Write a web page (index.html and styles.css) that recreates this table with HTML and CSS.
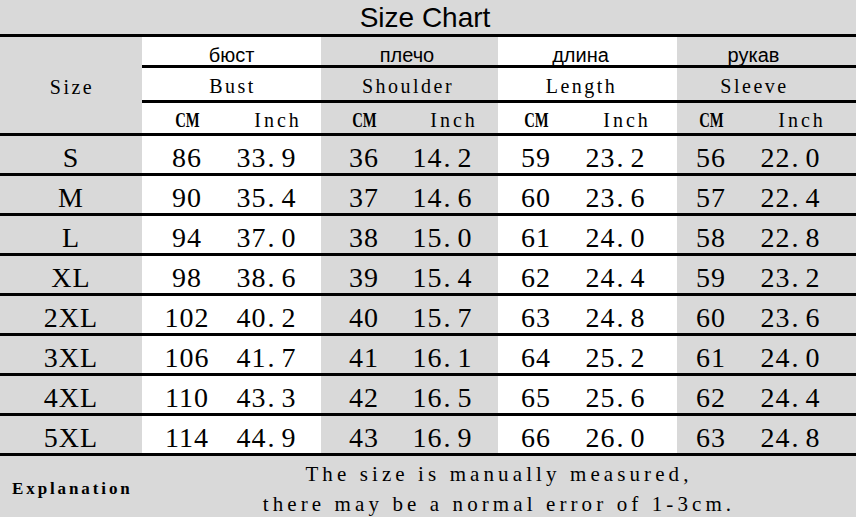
FILE: index.html
```html
<!DOCTYPE html>
<html lang="en">
<head>
<meta charset="utf-8">
<title>Size Chart</title>
<link rel="stylesheet" href="styles.css">
</head>
<body>
<div class="chart">
  <div class="title">Size Chart</div>

  <div class="size-head">Size</div>
  <div class="c cyr w">бюст</div>
  <div class="c cyr s2">плечо</div>
  <div class="c cyr w s3">длина</div>
  <div class="c cyr s4">рукав</div>

  <div class="c eng w">Bust</div>
  <div class="c eng s2">Shoulder</div>
  <div class="c eng w s3">Length</div>
  <div class="c eng s4">Sleeve</div>

  <div class="c unit w"><span class="cmt">CM</span></div><div class="c unit inch w">Inch</div>
  <div class="c unit"><span class="cmt">CM</span></div><div class="c unit inch">Inch</div>
  <div class="c unit w"><span class="cmt">CM</span></div><div class="c unit inch w">Inch</div>
  <div class="c unit"><span class="cmt">CM</span></div><div class="c unit inch">Inch</div>

  <div class="c sz">S</div>
  <div class="c v w">86</div><div class="c v iv w">33<span class="d">.</span>9</div>
  <div class="c v">36</div><div class="c v iv">14<span class="d">.</span>2</div>
  <div class="c v w">59</div><div class="c v iv w">23<span class="d">.</span>2</div>
  <div class="c v">56</div><div class="c v iv">22<span class="d">.</span>0</div>

  <div class="c sz">M</div>
  <div class="c v w">90</div><div class="c v iv w">35<span class="d">.</span>4</div>
  <div class="c v">37</div><div class="c v iv">14<span class="d">.</span>6</div>
  <div class="c v w">60</div><div class="c v iv w">23<span class="d">.</span>6</div>
  <div class="c v">57</div><div class="c v iv">22<span class="d">.</span>4</div>

  <div class="c sz">L</div>
  <div class="c v w">94</div><div class="c v iv w">37<span class="d">.</span>0</div>
  <div class="c v">38</div><div class="c v iv">15<span class="d">.</span>0</div>
  <div class="c v w">61</div><div class="c v iv w">24<span class="d">.</span>0</div>
  <div class="c v">58</div><div class="c v iv">22<span class="d">.</span>8</div>

  <div class="c sz">XL</div>
  <div class="c v w">98</div><div class="c v iv w">38<span class="d">.</span>6</div>
  <div class="c v">39</div><div class="c v iv">15<span class="d">.</span>4</div>
  <div class="c v w">62</div><div class="c v iv w">24<span class="d">.</span>4</div>
  <div class="c v">59</div><div class="c v iv">23<span class="d">.</span>2</div>

  <div class="c sz">2XL</div>
  <div class="c v w">102</div><div class="c v iv w">40<span class="d">.</span>2</div>
  <div class="c v">40</div><div class="c v iv">15<span class="d">.</span>7</div>
  <div class="c v w">63</div><div class="c v iv w">24<span class="d">.</span>8</div>
  <div class="c v">60</div><div class="c v iv">23<span class="d">.</span>6</div>

  <div class="c sz">3XL</div>
  <div class="c v w">106</div><div class="c v iv w">41<span class="d">.</span>7</div>
  <div class="c v">41</div><div class="c v iv">16<span class="d">.</span>1</div>
  <div class="c v w">64</div><div class="c v iv w">25<span class="d">.</span>2</div>
  <div class="c v">61</div><div class="c v iv">24<span class="d">.</span>0</div>

  <div class="c sz">4XL</div>
  <div class="c v w">110</div><div class="c v iv w">43<span class="d">.</span>3</div>
  <div class="c v">42</div><div class="c v iv">16<span class="d">.</span>5</div>
  <div class="c v w">65</div><div class="c v iv w">25<span class="d">.</span>6</div>
  <div class="c v">62</div><div class="c v iv">24<span class="d">.</span>4</div>

  <div class="c sz">5XL</div>
  <div class="c v w">114</div><div class="c v iv w">44<span class="d">.</span>9</div>
  <div class="c v">43</div><div class="c v iv">16<span class="d">.</span>9</div>
  <div class="c v w">66</div><div class="c v iv w">26<span class="d">.</span>0</div>
  <div class="c v">63</div><div class="c v iv">24<span class="d">.</span>8</div>

  <div class="ex">Explanation</div>
  <div class="msg">The size is manually measured,<br>there may be a normal error of 1-3cm.</div>
</div>
</body>
</html>
```

FILE: styles.css
```css
* { box-sizing: border-box; margin: 0; padding: 0; }
html, body { width: 856px; height: 517px; overflow: hidden; }
body {
  background: #d9d9d9;
  color: #000;
  font-family: "Liberation Serif", "Times New Roman", serif;
}
.chart {
  display: grid;
  grid-template-columns: 142px 90px 89px 86px 91px 76px 103px 68px 111px;
  grid-template-rows: 37px 31px 35px 33px repeat(8, 40px) 61px;
  width: 856px;
  height: 517px;
}
.title {
  grid-column: 1 / -1;
  border-bottom: 3px solid #000;
  font-family: "Liberation Sans", Arial, sans-serif;
  font-size: 28px;
  line-height: 32px;
  padding-top: 2px;
  padding-right: 6px;
  text-align: center;
}
.c {
  border-bottom: 3px solid #000;
  text-align: center;
  white-space: nowrap;
}
.w { background: #fff; }
.size-head {
  grid-column: 1;
  grid-row: 2 / 5;
  border-bottom: 3px solid #000;
  text-align: center;
  font-size: 20px;
  line-height: 21px;
  padding-top: 40px;
  letter-spacing: 2.5px;
  padding-left: 2px;
}
.cyr {
  grid-column: span 2;
  font-family: "Liberation Sans", Arial, sans-serif;
  font-size: 20px;
  line-height: 22px;
  padding-top: 7px;
}
.eng {
  grid-column: span 2;
  font-size: 20px;
  line-height: 21px;
  padding-top: 8px;
  letter-spacing: 2.5px;
  padding-left: 2px;
}
.s2 { padding-right: 5px; }
.s3 { padding-right: 14px; }
.s4 { padding-right: 26px; }
.unit {
  font-size: 20px;
  line-height: 21px;
  padding-top: 7px;
}
.cmt {
  display: inline-block;
  font-weight: bold;
  font-size: 21px;
  transform: scaleX(0.7);
}
.inch { letter-spacing: 3px; padding-left: 3px; }
.sz, .v {
  font-size: 28px;
  line-height: 31px;
  padding-top: 6px;
  letter-spacing: 1px;
}
.iv { padding-right: 20px; }
.d {
  display: inline-block;
  width: 15px;
  text-align: left;
  padding-left: 1px;
}
.ex {
  grid-column: 1;
  font-weight: bold;
  font-size: 17px;
  line-height: 18px;
  padding-top: 24px;
  padding-left: 12px;
  letter-spacing: 2.9px;
  white-space: nowrap;
}
.msg {
  grid-column: 2 / -1;
  font-size: 21px;
  line-height: 30px;
  padding-top: 3px;
  letter-spacing: 4.1px;
  text-align: center;
  white-space: nowrap;
}
```
